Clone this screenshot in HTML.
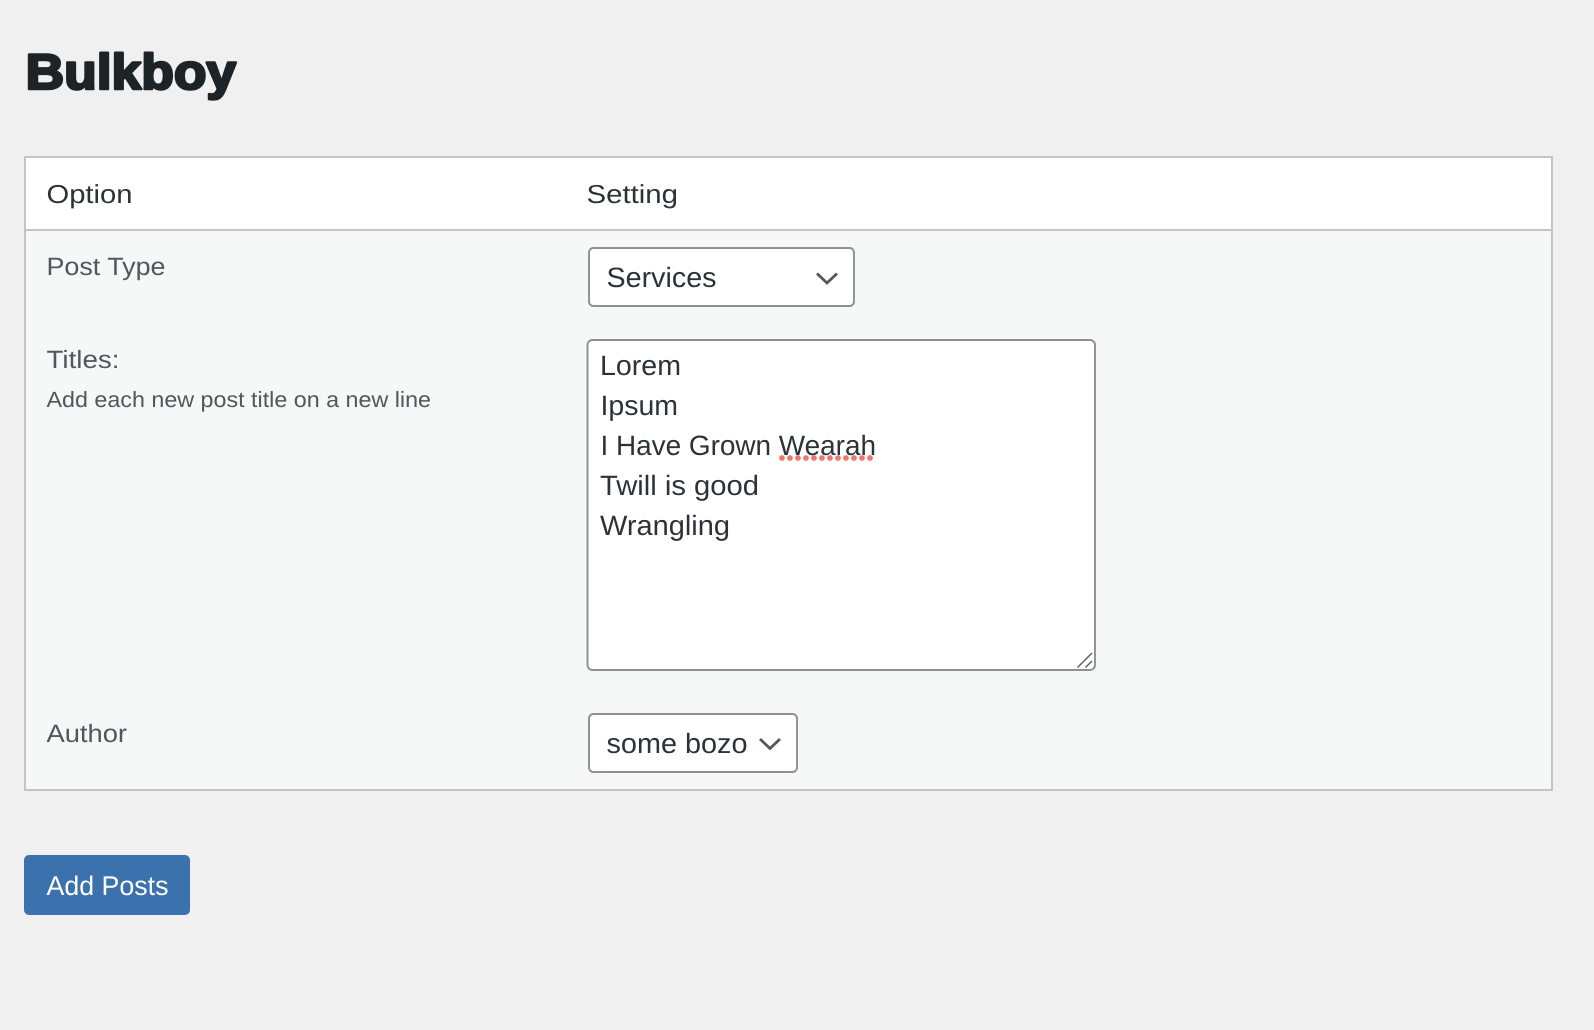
<!DOCTYPE html>
<html lang="en">
<head>
<meta charset="utf-8">
<title>Bulkboy</title>
<style>
html,body{margin:0;padding:0;background:#f0f0f1;width:1594px;height:1030px;overflow:hidden}
svg{display:block;position:absolute;left:0;top:0}
text{font-family:"Liberation Sans","DejaVu Sans",sans-serif;text-rendering:geometricPrecision}
</style>
</head>
<body>
<svg width="1594" height="1030" viewBox="0 0 1594 1030" xmlns="http://www.w3.org/2000/svg">
  <rect width="1594" height="1030" fill="#f0f0f1"/>

  <text x="25.6" y="89" font-size="50" font-weight="700" fill="#1d2327" stroke="#1d2327" stroke-width="2.6" stroke-linejoin="round" textLength="210.5" lengthAdjust="spacingAndGlyphs">Bulkboy</text>

  <!-- Table -->
  <rect x="25" y="157" width="1527" height="633" fill="#f6f7f7" stroke="#c3c4c7" stroke-width="2"/>
  <rect x="26" y="158" width="1525" height="71" fill="#ffffff"/>
  <rect x="26" y="229" width="1525" height="2" fill="#c3c4c7"/>

  <text x="46.5" y="203" font-size="26" fill="#2c3338" textLength="86" lengthAdjust="spacingAndGlyphs">Option</text>
  <text x="586.5" y="203" font-size="26" fill="#2c3338" textLength="91.5" lengthAdjust="spacingAndGlyphs">Setting</text>

  <text x="46.5" y="275" font-size="25" fill="#50575e" textLength="119" lengthAdjust="spacingAndGlyphs">Post Type</text>
  <text x="46.5" y="368" font-size="25" fill="#50575e" textLength="73" lengthAdjust="spacingAndGlyphs">Titles:</text>
  <text x="46.5" y="407" font-size="22" fill="#50575e" textLength="384.5" lengthAdjust="spacingAndGlyphs">Add each new post title on a new line</text>
  <text x="46.5" y="742" font-size="25" fill="#50575e" textLength="80.5" lengthAdjust="spacingAndGlyphs">Author</text>

  <!-- Post type select -->
  <rect x="589" y="248" width="265" height="58" rx="4.5" fill="#ffffff" stroke="#8c8f94" stroke-width="1.9"/>
  <text x="606.5" y="287" font-size="28" fill="#2c3338" textLength="110" lengthAdjust="spacingAndGlyphs">Services</text>
  <path d="M817 273.5 L827 283 L837 273.5" fill="none" stroke="#50575e" stroke-width="2.8"/>

  <!-- Textarea -->
  <rect x="587.5" y="340" width="507.5" height="330" rx="5" fill="#ffffff" stroke="#8c8f94" stroke-width="1.9"/>
  <text x="600" y="375" font-size="28" fill="#2c3338" textLength="81" lengthAdjust="spacingAndGlyphs">Lorem</text>
  <text x="600.5" y="415" font-size="28" fill="#2c3338" textLength="77.5" lengthAdjust="spacingAndGlyphs">Ipsum</text>
  <text x="600.5" y="455" font-size="28" fill="#2c3338" textLength="275.5" lengthAdjust="spacingAndGlyphs">I Have Grown Wearah</text>
  <text x="600" y="495" font-size="28" fill="#2c3338" textLength="159" lengthAdjust="spacingAndGlyphs">Twill is good</text>
  <text x="600" y="535" font-size="28" fill="#2c3338" textLength="130" lengthAdjust="spacingAndGlyphs">Wrangling</text>
  <line x1="782" y1="458" x2="872" y2="458" stroke="#f2766d" stroke-width="5.8" stroke-linecap="round" stroke-dasharray="0 8"/>
  <path d="M1077.5 667.5 L1092 653 M1085.5 667.5 L1092 661" fill="none" stroke="#5c5f62" stroke-width="1.5"/>

  <!-- Author select -->
  <rect x="589" y="714" width="208" height="58" rx="4.5" fill="#ffffff" stroke="#8c8f94" stroke-width="1.9"/>
  <text x="606.5" y="753" font-size="28" fill="#2c3338" textLength="141" lengthAdjust="spacingAndGlyphs">some bozo</text>
  <path d="M760 739 L770 748.5 L780 739" fill="none" stroke="#50575e" stroke-width="2.8"/>

  <!-- Button -->
  <rect x="24" y="855" width="166" height="60" rx="5" fill="#3b71ad"/>
  <text x="46.5" y="895" font-size="27" fill="#ffffff" textLength="122" lengthAdjust="spacingAndGlyphs">Add Posts</text>
</svg>
</body>
</html>
